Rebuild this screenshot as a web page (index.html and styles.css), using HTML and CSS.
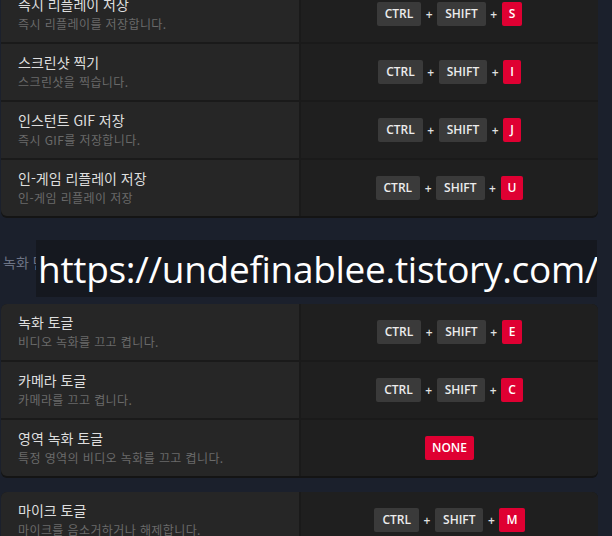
FILE: index.html
```html
<!DOCTYPE html>
<html lang="ko">
<head>
  <meta charset="UTF-8" />
  <title>단축키 설정</title>
  <link rel="stylesheet" href="styles.css">
</head>
<body>

  <div class="page">
    <!-- 리플레이 / 스크린샷 -->
    <section class="card card-first">
      <div class="row">
        <div class="info">
          <div class="title">즉시 리플레이 저장</div>
          <div class="desc">즉시 리플레이를 저장합니다.</div>
        </div>
        <div class="keys">
          <span class="key">CTRL</span><span class="plus">+</span><span class="key">SHIFT</span><span class="plus">+</span><span class="key red">S</span>
        </div>
      </div>
      <div class="row">
        <div class="info">
          <div class="title">스크린샷 찍기</div>
          <div class="desc">스크린샷을 찍습니다.</div>
        </div>
        <div class="keys">
          <span class="key">CTRL</span><span class="plus">+</span><span class="key">SHIFT</span><span class="plus">+</span><span class="key red">I</span>
        </div>
      </div>
      <div class="row">
        <div class="info">
          <div class="title">인스턴트 GIF 저장</div>
          <div class="desc">즉시 GIF를 저장합니다.</div>
        </div>
        <div class="keys">
          <span class="key">CTRL</span><span class="plus">+</span><span class="key">SHIFT</span><span class="plus">+</span><span class="key red">J</span>
        </div>
      </div>
      <div class="row">
        <div class="info">
          <div class="title">인-게임 리플레이 저장</div>
          <div class="desc">인-게임 리플레이 저장</div>
        </div>
        <div class="keys">
          <span class="key">CTRL</span><span class="plus">+</span><span class="key">SHIFT</span><span class="plus">+</span><span class="key red">U</span>
        </div>
      </div>
    </section>

    <h2 class="section-title">녹화 단축키</h2>

    <section class="card">
      <div class="row">
        <div class="info">
          <div class="title">녹화 토글</div>
          <div class="desc">비디오 녹화를 끄고 켭니다.</div>
        </div>
        <div class="keys">
          <span class="key">CTRL</span><span class="plus">+</span><span class="key">SHIFT</span><span class="plus">+</span><span class="key red">E</span>
        </div>
      </div>
      <div class="row">
        <div class="info">
          <div class="title">카메라 토글</div>
          <div class="desc">카메라를 끄고 켭니다.</div>
        </div>
        <div class="keys">
          <span class="key">CTRL</span><span class="plus">+</span><span class="key">SHIFT</span><span class="plus">+</span><span class="key red">C</span>
        </div>
      </div>
      <div class="row">
        <div class="info">
          <div class="title">영역 녹화 토글</div>
          <div class="desc">특정 영역의 비디오 녹화를 끄고 켭니다.</div>
        </div>
        <div class="keys">
          <span class="key red">NONE</span>
        </div>
      </div>
    </section>

    <section class="card card-gap">
      <div class="row">
        <div class="info">
          <div class="title">마이크 토글</div>
          <div class="desc">마이크를 음소거하거나 해제합니다.</div>
        </div>
        <div class="keys">
          <span class="key">CTRL</span><span class="plus">+</span><span class="key">SHIFT</span><span class="plus">+</span><span class="key red">M</span>
        </div>
      </div>
    </section>
  </div>

  <!-- 워터마크 -->
  <div class="watermark">https://undefinablee.tistory.com/</div>

</body>
</html>
```

FILE: styles.css
```css
body {
  margin: 0;
  background: #1b202c;
  font-family: "Noto Sans CJK KR", "Noto Sans", sans-serif;
  overflow: hidden;
  position: relative;
  height: 536px;
}

.page {
  width: 597px;
  padding-left: 1px;
}

/* 카드 */
.card {
  background: #1a1a1a;
  border-radius: 6px;
  overflow: hidden;
  box-shadow: 0 2px 0 #141414;
}
.card-first {
  margin-top: -14px;
}
.card-gap {
  margin-top: 16px;
}

.row {
  display: grid;
  grid-template-columns: 298px 1fr;
  column-gap: 2px;
  height: 56px;
}
.row + .row {
  margin-top: 2px;
}

.info {
  background: #262626;
  padding: 9px 0 0 17px;
}
.title {
  font-size: 14px;
  line-height: 19px;
  color: #dedede;
}
.desc {
  font-size: 12px;
  line-height: 16px;
  margin-top: 2px;
  color: #6a6a6a;
  letter-spacing: 0.4px;
}

.keys {
  background: #1f1f1f;
  display: flex;
  align-items: center;
  justify-content: center;
}

.key {
  background: #3a3a3a;
  color: #ececec;
  font-family: "Open Sans", "Noto Sans", sans-serif;
  font-weight: 600;
  font-size: 12px;
  line-height: 24px;
  height: 24px;
  padding: 0 8px;
  border-radius: 2px;
}
.key.red {
  background: #df0032;
  color: #fff;
  padding: 0 7px;
}
.plus {
  color: #e2e2e2;
  font-family: "Open Sans", sans-serif;
  font-weight: 600;
  font-size: 12px;
  width: 16px;
  text-align: center;
}

.section-title {
  margin: 36px 0 32px 2px;
  font-size: 14px;
  line-height: 20px;
  font-weight: 400;
  color: #6c7385;
}

.watermark {
  position: absolute;
  left: 36px;
  top: 240px;
  width: 561px;
  height: 57px;
  background: #15181f;
  color: #fff;
  font-family: "Open Sans", sans-serif;
  font-size: 37px;
  letter-spacing: -0.3px;
  line-height: 57px;
  white-space: nowrap;
  overflow: hidden;
  padding-left: 2px;
  box-sizing: border-box;
}
```
